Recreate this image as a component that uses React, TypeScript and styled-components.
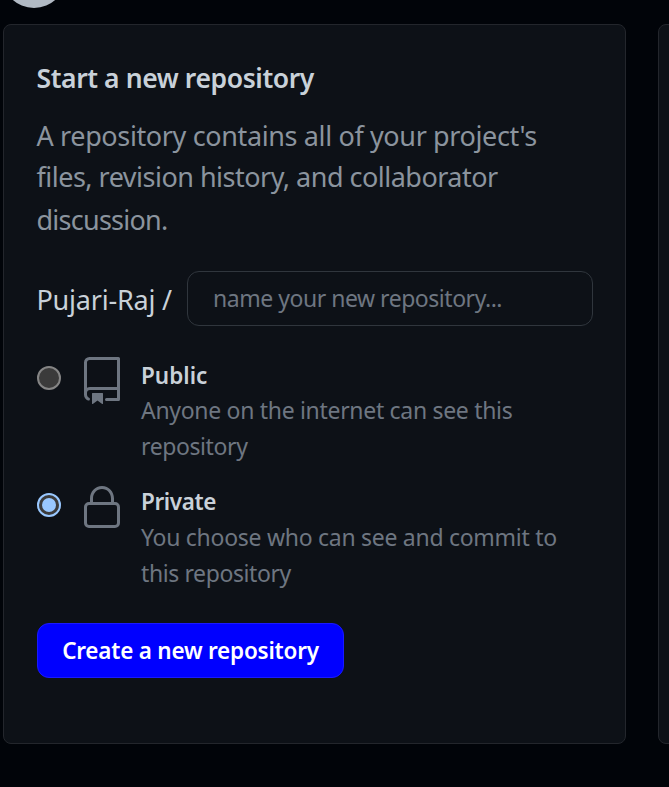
import React from "react";
import styled, { createGlobalStyle } from "styled-components";

const GlobalStyle = createGlobalStyle`
  * { box-sizing: border-box; }
  html, body { margin: 0; background: #010409; }
  body {
    width: 669px;
    height: 787px;
    overflow: hidden;
    font-family: "Noto Sans", "Open Sans", sans-serif;
    color: #c9d1d9;
  }
`;

const Page = styled.div`
  display: flex;
  flex-direction: column;
  width: 669px;
  height: 787px;
  overflow: hidden;
`;

const TopStrip = styled.div`
  display: flex;
  align-items: flex-end;
  height: 8px;
  margin-bottom: 16px;
  padding-left: 2px;
  overflow: hidden;
`;

const Avatar = styled.div`
  flex: none;
  width: 64px;
  height: 64px;
  border-radius: 50%;
  background: #b1bac4;
`;

const Columns = styled.div`
  display: flex;
  gap: 32px;
  padding-left: 3px;
`;

const Card = styled.section`
  flex: none;
  width: 623px;
  height: 720px;
  padding: 32px 32px 0 32.5px;
  border: 1px solid #23262c;
  border-radius: 8px;
  background: #0d1117;
`;

const Title = styled.h2`
  margin: 0;
  font-size: 26.5px;
  font-weight: 600;
  line-height: 42px;
  letter-spacing: -0.4px;
  white-space: nowrap;
`;

const Description = styled.p`
  margin: 16px 0 0;
  font-size: 27px;
  color: #8b949e;
`;

const Line = styled.span<{ $tracking: number; $height: number }>`
  display: block;
  line-height: ${(p) => p.$height}px;
  letter-spacing: ${(p) => p.$tracking}px;
  white-space: nowrap;
`;

const NameRow = styled.div`
  display: flex;
  align-items: center;
  height: 56px;
  margin-top: 28px;
`;

const Owner = styled.span`
  flex: none;
  width: 150.5px;
  padding-top: 3px;
  font-size: 27px;
  line-height: 42px;
  letter-spacing: -0.22px;
  white-space: nowrap;
`;

const NameInput = styled.input`
  width: 407px;
  height: 55px;
  padding: 0 25px 0 25px;
  border: 1px solid #30363d;
  border-radius: 12px;
  outline: none;
  background: #0d1117;
  color: #c9d1d9;
  font: 23px "Noto Sans", sans-serif;
  letter-spacing: -0.47px;
  &::placeholder { color: #6e7681; opacity: 1; }
`;

const Option = styled.label<{ $top: number }>`
  display: grid;
  grid-template-columns: 41px 63.5px 1fr;
  margin-top: ${(p) => p.$top}px;
`;

const Radio = styled.input`
  appearance: none;
  display: grid;
  place-items: center;
  width: 24px;
  height: 24px;
  margin: 9px 0 0;
  border: 2px solid #858585;
  border-radius: 50%;
  background: #3b3b3b;
  &:checked { border-color: #99c8ff; }
  &:checked::before {
    content: "";
    width: 14px;
    height: 14px;
    border-radius: 50%;
    background: #99c8ff;
  }
`;

const Icon = styled.svg`
  display: block;
  width: 48px;
  height: 48px;
  fill: #6e7681;
`;

const OptionName = styled.div<{ $tracking: number; $height: number }>`
  font-size: 22.5px;
  font-weight: 600;
  line-height: ${(p) => p.$height}px;
  letter-spacing: ${(p) => p.$tracking}px;
`;

const OptionText = styled.div<{ $pull: number }>`
  margin-top: ${(p) => -p.$pull}px;
  font-size: 23px;
  color: #6e7681;
`;

const CreateButton = styled.button`
  display: block;
  width: 307px;
  height: 55px;
  margin: 32px 0 0 0.5px;
  padding: 0;
  border: 1px solid #1a1aff;
  border-radius: 12px;
  background: #0000ff;
  color: #ffffff;
  font: 600 22.5px "Noto Sans", sans-serif;
  letter-spacing: -0.22px;
  white-space: nowrap;
`;

const RepoIcon = () => (
  <Icon viewBox="0 0 24 24">
    <path d="M3 2.75A2.75 2.75 0 0 1 5.75 0h14.5a.75.75 0 0 1 .75.75v20.5a.75.75 0 0 1-.75.75h-6a.75.75 0 0 1 0-1.5h5.25v-4H6A1.5 1.5 0 0 0 4.5 18v.75c0 .716.43 1.334 1.05 1.605a.75.75 0 0 1-.6 1.374A3.251 3.251 0 0 1 3 18.75ZM19.5 1.5H5.75c-.69 0-1.25.56-1.25 1.25v12.651A2.989 2.989 0 0 1 6 15h13.5Z" />
    <path d="M7 18.25a.25.25 0 0 1 .25-.25h5a.25.25 0 0 1 .25.25v5.01a.25.25 0 0 1-.397.201l-2.206-1.604a.25.25 0 0 0-.294 0L7.397 23.46a.25.25 0 0 1-.397-.2v-5.01Z" />
  </Icon>
);

const LockIcon = () => (
  <Icon viewBox="0 0 24 24">
    <path d="M6 9V7.25C6 3.845 8.503 1 12 1s6 2.845 6 6.25V9h.5a2.5 2.5 0 0 1 2.5 2.5v8a2.5 2.5 0 0 1-2.5 2.5h-13A2.5 2.5 0 0 1 3 19.5v-8A2.5 2.5 0 0 1 5.5 9Zm-1.5 2.5v8a1 1 0 0 0 1 1h13a1 1 0 0 0 1-1v-8a1 1 0 0 0-1-1h-13a1 1 0 0 0-1 1Zm3-4.25V9h9V7.25c0-2.67-1.922-4.75-4.5-4.75-2.578 0-4.5 2.08-4.5 4.75Z" />
  </Icon>
);

export default function App() {
  return (
    <Page>
      <GlobalStyle />
      <TopStrip>
        <Avatar />
      </TopStrip>
      <Columns>
        <Card>
          <Title>Start a new repository</Title>
          <Description>
            <Line $height={42} $tracking={-0.37}>A repository contains all of your project's</Line>
            <Line $height={40} $tracking={-0.51}>files, revision history, and collaborator</Line>
            <Line $height={45} $tracking={-0.75}>discussion.</Line>
          </Description>
          <NameRow>
            <Owner>Pujari-Raj /</Owner>
            <NameInput placeholder="name your new repository..." />
          </NameRow>
          <Option $top={31}>
            <Radio type="radio" name="visibility" />
            <RepoIcon />
            <div>
              <OptionName $height={38} $tracking={0}>Public</OptionName>
              <OptionText $pull={3}>
                <Line $height={36} $tracking={-0.31}>Anyone on the internet can see this</Line>
                <Line $height={36} $tracking={-0.4}>repository</Line>
              </OptionText>
            </div>
          </Option>
          <Option $top={20}>
            <Radio type="radio" name="visibility" defaultChecked />
            <LockIcon />
            <div>
              <OptionName $height={36} $tracking={-0.4}>Private</OptionName>
              <OptionText $pull={1}>
                <Line $height={36} $tracking={-0.28}>You choose who can see and commit to</Line>
                <Line $height={36} $tracking={-0.4}>this repository</Line>
              </OptionText>
            </div>
          </Option>
          <CreateButton type="button">Create a new repository</CreateButton>
        </Card>
        <Card />
      </Columns>
    </Page>
  );
}
